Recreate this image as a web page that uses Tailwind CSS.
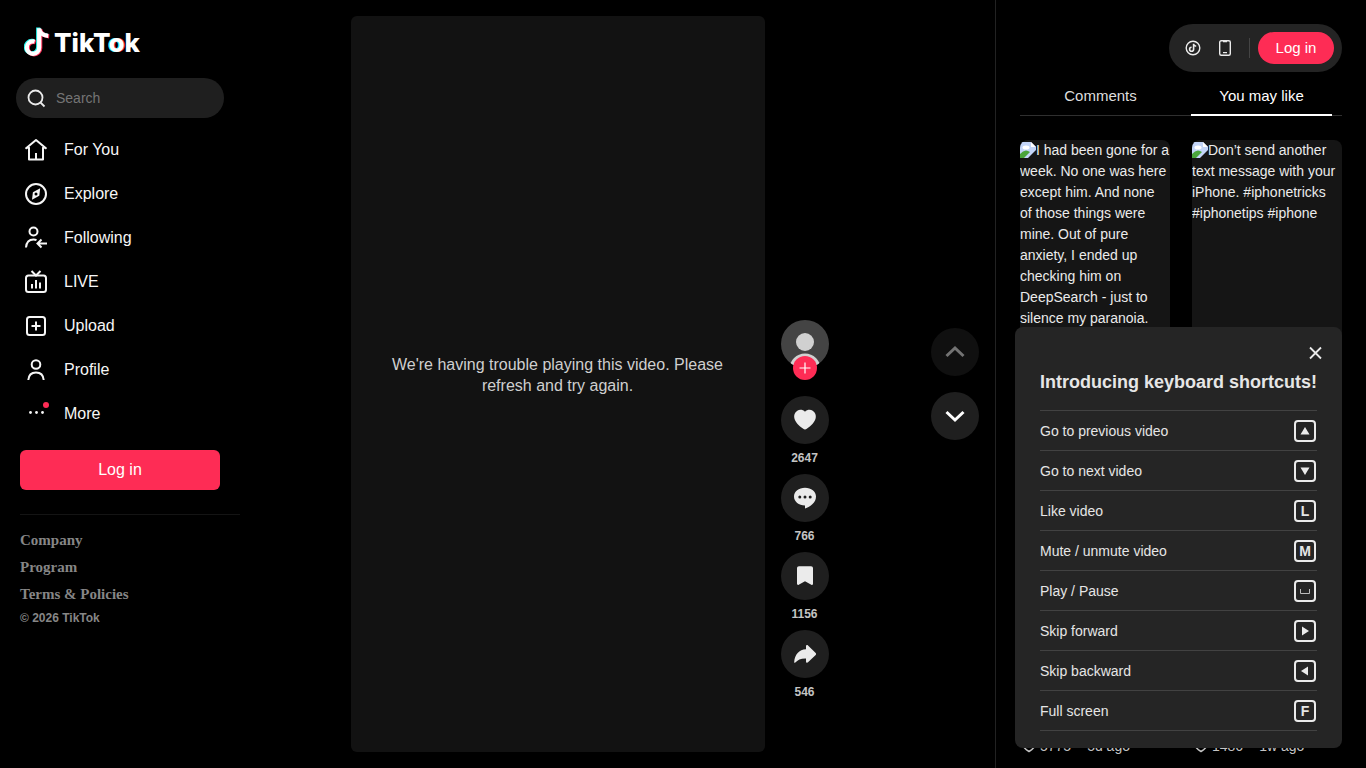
<!DOCTYPE html>
<html lang="en">
<head>
    <meta charset="UTF-8">
    <meta name="viewport" content="width=device-width, initial-scale=1.0">
    <title>TikTok</title>
    <script src="https://cdn.jsdelivr.net/npm/@tailwindcss/browser@4"></script>
</head>
<body class="bg-black text-white font-['Liberation_Sans',Arial,sans-serif] h-screen overflow-hidden flex">

    <!-- Sidebar -->
    <aside class="w-60 shrink-0 flex flex-col">
        <a href="#" class="flex items-center gap-1 pl-6 pt-6 h-[62px]" aria-label="TikTok home">
            <svg class="w-[26px] h-[34px]" viewBox="0 0 26 34">
                <g fill="none" stroke-width="4.200">
                    <path stroke="#25f4ee" d="M14.200 1.500v19.500a6.200 6.200 0 1 1-6.200-6.200q1 0 1.600.2M14.200 2.500q1 6.200 9 6.800" />
                    <path stroke="#fe2c55" d="M16.200 3v19.200a6.200 6.200 0 1 1-6.200-6.200q1 0 1.600.2M16.200 3.500q1 6.200 9 6.800" />
                    <path stroke="#fff" d="M15.200 2.300v19.300a6.200 6.200 0 1 1-6.200-6.200q1 0 1.600.2M15.200 3q1 6.200 9 6.800" />
                </g>
            </svg>
            <span class="font-['Inter',sans-serif] font-extrabold text-[26px] leading-8">TikT<span class="[text-shadow:-1px_0_#25f4ee,1px_0_#fe2c55]">o</span>k</span>
        </a>

        <label class="flex items-center gap-2 mx-4 mt-4 h-10 pl-2 rounded-full bg-[#1f1f1f]">
            <svg class="size-6 shrink-0" viewBox="0 0 24 24" fill="none" stroke="#ebebeb" stroke-width="1.8"><circle cx="11.500" cy="11.500" r="7" /><path d="m16.500 16.500 4 4" /></svg>
            <input type="search" aria-label="Search" placeholder="Search" class="w-full min-w-0 bg-transparent text-sm outline-none placeholder:text-[#757575]">
        </label>

        <nav class="mt-2.5 pl-6 text-base text-[#f6f6f6]">
            <a href="#" class="flex items-center gap-4 h-11">
                <svg class="size-6" viewBox="0 0 24 24" fill="none" stroke="currentColor" stroke-width="2" stroke-linejoin="round"><path d="M1.500 10.800 12 2l10.500 8.800M3 9.800h2v11.700h14V9.800h2M12 15v6" /></svg>
                For You
            </a>
            <a href="#" class="flex items-center gap-4 h-11">
                <svg class="size-6" viewBox="0 0 24 24" fill="none" stroke="currentColor" stroke-width="2"><circle cx="12" cy="12" r="10" /><path fill="currentColor" stroke="none" fill-rule="evenodd" d="M16.200 6.300 8.900 10.200 8 17.700l7.300-3.900zM12 10.500a1.500 1.500 0 1 1 0 3 1.500 1.500 0 0 1 0-3z" /></svg>
                Explore
            </a>
            <a href="#" class="flex items-center gap-4 h-11">
                <svg class="size-6" viewBox="0 0 24 24" fill="none" stroke="currentColor" stroke-width="2"><circle cx="9.500" cy="5.500" r="4" /><path d="M2 21.500c.4-5.200 3.400-8 7.500-8q1.700 0 3 .6M23 17.500h-9M17.500 13.500l-4 4 4 4" /></svg>
                Following
            </a>
            <a href="#" class="flex items-center gap-4 h-11">
                <svg class="size-6" viewBox="0 0 24 24" fill="none" stroke="currentColor" stroke-width="2"><rect x="2" y="5.500" width="20" height="16.500" rx="2.500" /><path d="m7.500 1 4.500 4.500L16.500 1M8 14v4.500M12 10v8.500M16 12.500v6" /></svg>
                LIVE
            </a>
            <a href="#" class="flex items-center gap-4 h-11">
                <svg class="size-6" viewBox="0 0 24 24" fill="none" stroke="currentColor" stroke-width="2"><rect x="3" y="3" width="18" height="18" rx="2.500" /><path d="M12 7.500v9M7.500 12h9" /></svg>
                Upload
            </a>
            <a href="#" class="flex items-center gap-4 h-11">
                <svg class="size-6" viewBox="0 0 24 24" fill="none" stroke="currentColor" stroke-width="2"><circle cx="12" cy="6.500" r="4.300" /><path d="M4.300 22c.4-5 3.400-7.500 7.700-7.500s7.300 2.500 7.700 7.500" /></svg>
                Profile
            </a>
            <a href="#" class="flex items-center gap-4 h-11">
                <svg class="size-6 overflow-visible" viewBox="0 0 24 24" fill="currentColor"><circle cx="6.500" cy="10.500" r="1.400" /><circle cx="12.500" cy="10.500" r="1.400" /><circle cx="18.500" cy="10.500" r="1.400" /><circle cx="22" cy="3" r="3" fill="#fe2c55" /></svg>
                More
            </a>
        </nav>

        <button class="mx-5 mt-3.5 h-10 rounded-md bg-[#fe2c55] text-base">Log in</button>

        <footer class="ml-5 mt-6 pt-3 border-t border-[#141414] text-[#868686]">
            <div class="flex flex-col font-['Liberation_Serif',serif] font-bold text-[15px] leading-[27px]">
                <a href="#">Company</a>
                <a href="#">Program</a>
                <a href="#">Terms &amp; Policies</a>
            </div>
            <p class="text-xs leading-5 font-bold">© 2026 TikTok</p>
        </footer>
    </aside>

    <!-- Player -->
    <main class="flex-1 flex pr-4">
        <div class="flex-1 flex justify-center gap-4 py-4 pl-2">
            <section class="h-full aspect-[9/16] rounded-md bg-[#121212] flex items-center justify-center px-8 pb-[18px] text-center text-base leading-[21px] text-[#cfcfcf]">
                <p>We're having trouble playing this video. Please refresh and try again.</p>
            </section>
            <div class="w-12 flex flex-col items-center justify-end pb-11 text-xs leading-4 font-bold text-[#c4c4c4]">
                <div class="relative mb-7">
                    <a href="#" aria-label="Author profile" class="block size-12 rounded-full overflow-hidden bg-[#444]">
                        <svg class="size-12" viewBox="0 0 48 48" fill="#d0d0d0"><circle cx="24" cy="22" r="9" /><circle cx="24" cy="49" r="15.500" /></svg>
                    </a>
                    <button aria-label="Follow" class="absolute left-3 top-9 size-6 rounded-full bg-[#fe2c55] flex items-center justify-center">
                        <svg class="size-3" viewBox="0 0 12 12" stroke="#fff" stroke-width="1.200"><path d="M6 .5v11M.5 6h11" /></svg>
                    </button>
                </div>
                <button class="flex flex-col items-center gap-1.5 mb-2">
                    <span class="size-12 rounded-full bg-[#1f1f1f] flex items-center justify-center">
                        <svg class="size-6" viewBox="0 0 24 24" fill="#ebebeb"><path d="M12 3.700C10 1.600 6.600 1.200 4.300 2.700 1.600 4.400.8 7.200 1.300 10c.8 4.200 5 8 8.600 10.500 1.600 1.200 2.600 1.200 4.200 0 3.600-2.500 7.800-6.300 8.600-10.500.5-2.800-.3-5.600-3-7.300-2.300-1.500-5.700-1.100-7.700 1z" /></svg>
                    </span>
                    2647
                </button>
                <button class="flex flex-col items-center gap-1.5 mb-2">
                    <span class="size-12 rounded-full bg-[#1f1f1f] flex items-center justify-center">
                        <svg class="size-6" viewBox="0 0 24 24" fill="#ebebeb"><path fill-rule="evenodd" d="M12 1.800c6.200 0 11 3.700 11 8.700 0 6-5.500 10.300-11 12v-3.100C5.800 19.400 1 15.700 1 10.500 1 5.500 5.800 1.800 12 1.800zM6.800 9.500a1.500 1.500 0 1 0 0 3 1.500 1.500 0 0 0 0-3zm5.200 0a1.500 1.500 0 1 0 0 3 1.500 1.500 0 0 0 0-3zm5.200 0a1.500 1.500 0 1 0 0 3 1.500 1.500 0 0 0 0-3z" /></svg>
                    </span>
                    766
                </button>
                <button class="flex flex-col items-center gap-1.5 mb-2">
                    <span class="size-12 rounded-full bg-[#1f1f1f] flex items-center justify-center">
                        <svg class="size-6" viewBox="0 0 24 24" fill="#ebebeb"><path d="M4 4.300C4 3 4.800 2.300 6 2.300h12c1.200 0 2 .7 2 2v15.500c0 1-.9 1.500-1.700 1L12 17.300l-6.300 3.500c-.8.5-1.700 0-1.700-1z" /></svg>
                    </span>
                    1156
                </button>
                <button class="flex flex-col items-center gap-1.5 mb-2">
                    <span class="size-12 rounded-full bg-[#1f1f1f] flex items-center justify-center">
                        <svg class="size-6" viewBox="0 0 24 24" fill="#ebebeb"><path d="M13 4.200c0-1.200 1.200-1.600 2-.8l7.700 7.600c.5.600.5 1.400 0 2L15 20.300c-.8.800-2 .4-2-.8v-3.100c-5-.2-8.300 1.400-10.700 4.200-.5.600-1.200.3-1.100-.5C1.700 12.500 6 7.600 13 7.300z" /></svg>
                    </span>
                    546
                </button>
            </div>
        </div>
        <div class="flex flex-col justify-center gap-4">
            <button disabled aria-label="Previous video" class="size-12 rounded-full bg-[#101010] flex items-center justify-center">
                <svg class="size-6" viewBox="0 0 24 24" fill="none" stroke="#737373" stroke-width="3"><path d="m3.500 16 8.500-8 8.500 8" /></svg>
            </button>
            <button aria-label="Next video" class="size-12 rounded-full bg-[#1f1f1f] flex items-center justify-center">
                <svg class="size-6" viewBox="0 0 24 24" fill="none" stroke="#fff" stroke-width="3"><path d="m3.500 8 8.500 8 8.500-8" /></svg>
            </button>
        </div>
    </main>

    <!-- Right panel -->
    <aside class="relative w-[371px] shrink-0 flex flex-col border-l border-[#222] px-6 pt-6 pb-3">
        <div class="self-end flex items-center h-12 pl-4 pr-2 rounded-full bg-[#242424]">
            <button aria-label="Get coins" class="mr-4">
                <svg class="size-4" viewBox="0 0 16 16" fill="none" stroke="#ebebeb"><circle cx="8" cy="8" r="6.800" stroke-width="1.400" /><path stroke-width="1.600" d="M8.600 3.800v5.400a2 2 0 1 1-2-2M8.600 4q.3 2 2.600 2.300" /></svg>
            </button>
            <button aria-label="Get app" class="mr-4">
                <svg class="size-4" viewBox="0 0 16 16" fill="none" stroke="#ebebeb" stroke-width="1.400"><rect x="2.700" y=".7" width="10.600" height="14.600" rx="1.500" /><path d="M6 1.500h4M6 12.600h4" /></svg>
            </button>
            <span class="w-px h-5 mr-2 bg-[#444]"></span>
            <button class="w-19 h-8 rounded-full bg-[#fe2c55] text-[15px]">Log in</button>
        </div>

        <div class="grid grid-cols-2 border-b border-[#2f2f2f] text-[15px] leading-6 text-center">
            <a href="#" class="mx-2.5 -mb-px pt-3 pb-1.5 border-b-2 border-transparent text-[#dedede]">Comments</a>
            <a href="#" class="mx-2.5 -mb-px pt-3 pb-1.5 border-b-2 border-white">You may like</a>
        </div>

        <div class="flex-1 grid grid-cols-2 gap-[22px] mt-6 text-sm text-[#ebebeb]">
            <a href="#" class="flex flex-col">
                <span class="flex-1 rounded-lg overflow-hidden bg-[#151515] leading-[21px]">
                    <svg class="inline-block size-4 align-text-bottom" viewBox="0 0 16 16"><path fill="#c3d5f8" d="M0 0h11l5 5v3L8 16H0z" /><ellipse cx="6" cy="5.500" rx="3.500" ry="2" fill="#fff" /><path fill="#4aa53c" d="M0 16v-4q5-6 10-2l-6 6z" /><path fill="#fff" d="M11 0v5h5z" /></svg>I had been gone for a week. No one was here except him. And none of those things were mine. Out of pure anxiety, I ended up checking him on DeepSearch - just to silence my paranoia.
                </span>
                <span class="flex items-center gap-1 pl-0.5 leading-5 text-[#c4c4c4]">
                    <svg class="size-3.5" viewBox="0 0 14 14" fill="none" stroke="currentColor" stroke-width="1.500"><path d="M7 3C5 .6 1 2 1 5.300 1 8.500 4.500 11 7 12.500 9.500 11 13 8.500 13 5.300 13 2 9 .6 7 3z" /></svg>
                    5775<span class="ml-3">5d ago</span>
                </span>
            </a>
            <a href="#" class="flex flex-col">
                <span class="flex-1 rounded-lg overflow-hidden bg-[#151515] leading-[21px]">
                    <svg class="inline-block size-4 align-text-bottom" viewBox="0 0 16 16"><path fill="#c3d5f8" d="M0 0h11l5 5v3L8 16H0z" /><ellipse cx="6" cy="5.500" rx="3.500" ry="2" fill="#fff" /><path fill="#4aa53c" d="M0 16v-4q5-6 10-2l-6 6z" /><path fill="#fff" d="M11 0v5h5z" /></svg>Don’t send another text message with your iPhone. #iphonetricks #iphonetips #iphone
                </span>
                <span class="flex items-center gap-1 pl-0.5 leading-5 text-[#c4c4c4]">
                    <svg class="size-3.5" viewBox="0 0 14 14" fill="none" stroke="currentColor" stroke-width="1.500"><path d="M7 3C5 .6 1 2 1 5.300 1 8.500 4.500 11 7 12.500 9.500 11 13 8.500 13 5.300 13 2 9 .6 7 3z" /></svg>
                    1486<span class="ml-3">1w ago</span>
                </span>
            </a>
        </div>

        <!-- Keyboard shortcuts -->
        <section class="absolute right-6 bottom-5 w-[327px] rounded-lg bg-[#252525] px-[25px] pt-4 pb-[17px] text-[#e6e6e6]">
            <button aria-label="Close" class="block ml-auto -mr-2">
                <svg class="size-5" viewBox="0 0 20 20" fill="none" stroke="#ebebeb" stroke-width="1.800"><path d="m5 4.500 11 11m0-11-11 11" /></svg>
            </button>
            <h2 class="mt-2 mb-4 text-lg leading-[23px] font-bold whitespace-nowrap">Introducing keyboard shortcuts!</h2>
            <ul class="border-t border-[#424242] text-sm">
                <li class="flex items-center justify-between h-10 border-b border-[#424242]">Go to previous video
                    <kbd class="mr-px size-[22px] rounded border-2 border-[#ebebeb] flex items-center justify-center"><svg class="size-3" viewBox="0 0 12 12" fill="#ebebeb"><path d="M6 2 10.500 9.500h-9z" /></svg></kbd></li>
                <li class="flex items-center justify-between h-10 border-b border-[#424242]">Go to next video
                    <kbd class="mr-px size-[22px] rounded border-2 border-[#ebebeb] flex items-center justify-center"><svg class="size-3" viewBox="0 0 12 12" fill="#ebebeb"><path d="M6 10 10.500 2.500h-9z" /></svg></kbd></li>
                <li class="flex items-center justify-between h-10 border-b border-[#424242]">Like video
                    <kbd class="mr-px size-[22px] rounded border-2 border-[#ebebeb] flex items-center justify-center font-['Liberation_Sans',sans-serif] font-bold text-sm">L</kbd></li>
                <li class="flex items-center justify-between h-10 border-b border-[#424242]">Mute / unmute video
                    <kbd class="mr-px size-[22px] rounded border-2 border-[#ebebeb] flex items-center justify-center font-['Liberation_Sans',sans-serif] font-bold text-sm">M</kbd></li>
                <li class="flex items-center justify-between h-10 border-b border-[#424242]">Play / Pause
                    <kbd class="mr-px size-[22px] rounded border-2 border-[#ebebeb] flex items-center justify-center"><svg class="size-3" viewBox="0 0 12 12" fill="none" stroke="#bbb"><path d="M1.500 4v4.500h9V4" /></svg></kbd></li>
                <li class="flex items-center justify-between h-10 border-b border-[#424242]">Skip forward
                    <kbd class="mr-px size-[22px] rounded border-2 border-[#ebebeb] flex items-center justify-center"><svg class="size-3" viewBox="0 0 12 12" fill="#ebebeb"><path d="M10 6 3 10.500v-9z" /></svg></kbd></li>
                <li class="flex items-center justify-between h-10 border-b border-[#424242]">Skip backward
                    <kbd class="mr-px size-[22px] rounded border-2 border-[#ebebeb] flex items-center justify-center"><svg class="size-3" viewBox="0 0 12 12" fill="#ebebeb"><path d="M2 6 9 10.500v-9z" /></svg></kbd></li>
                <li class="flex items-center justify-between h-10 border-b border-[#424242]">Full screen
                    <kbd class="mr-px size-[22px] rounded border-2 border-[#ebebeb] flex items-center justify-center font-['Liberation_Sans',sans-serif] font-bold text-sm">F</kbd></li>
            </ul>
        </section>
    </aside>
</body>
</html>
